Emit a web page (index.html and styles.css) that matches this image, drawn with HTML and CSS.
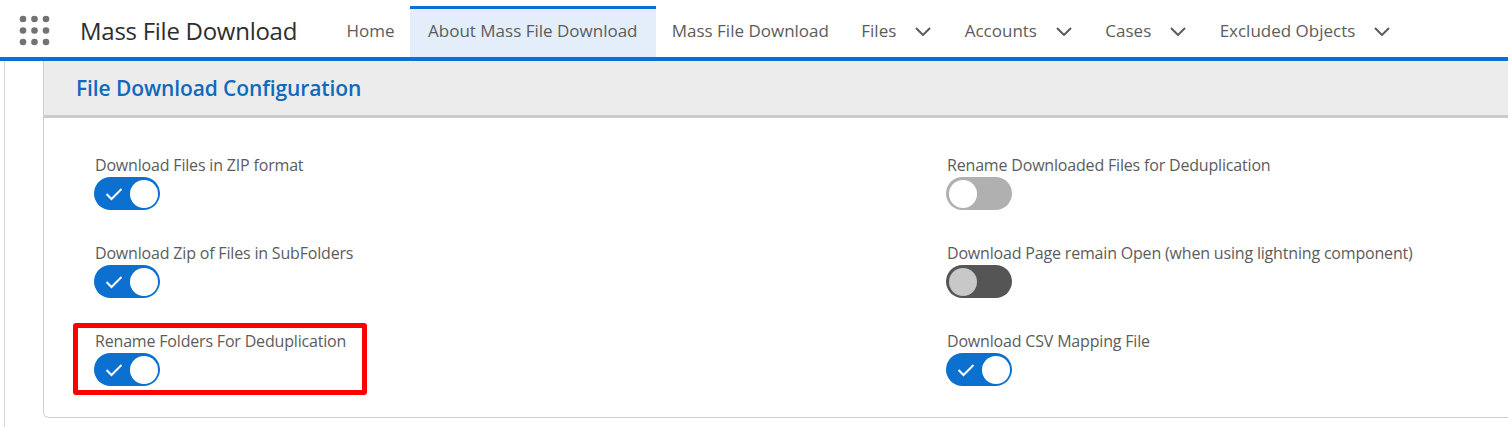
FILE: index.html
```html
<!DOCTYPE html>
<html lang="en">
<head>
    <meta charset="UTF-8">
    <title>Mass File Download</title>
    <link rel="stylesheet" href="styles.css">
</head>
<body>
    <header class="nav">
        <svg class="launcher" width="30" height="30" viewBox="0 0 30 30">
            <circle cx="3" cy="3" r="3.3"/><circle cx="14.5" cy="3" r="3.3"/><circle cx="26" cy="3" r="3.3"/>
            <circle cx="3" cy="14.5" r="3.3"/><circle cx="14.5" cy="14.5" r="3.3"/><circle cx="26" cy="14.5" r="3.3"/>
            <circle cx="3" cy="26" r="3.3"/><circle cx="14.5" cy="26" r="3.3"/><circle cx="26" cy="26" r="3.3"/>
        </svg>
        <div class="app-name">Mass File Download</div>
        <nav class="tabs">
            <a class="tab home">Home</a>
            <a class="tab active">About Mass File Download</a>
            <a class="tab">Mass File Download</a>
            <a class="tab">Files<svg class="chev" width="16" height="9" viewBox="0 0 16 9"><path d="M1 1l7 7 7-7"/></svg></a>
            <a class="tab">Accounts<svg class="chev" width="16" height="9" viewBox="0 0 16 9"><path d="M1 1l7 7 7-7"/></svg></a>
            <a class="tab">Cases<svg class="chev" width="16" height="9" viewBox="0 0 16 9"><path d="M1 1l7 7 7-7"/></svg></a>
            <a class="tab">Excluded Objects<svg class="chev" width="16" height="9" viewBox="0 0 16 9"><path d="M1 1l7 7 7-7"/></svg></a>
        </nav>
    </header>

    <main class="page">
        <section class="card">
            <h2 class="card-title">File Download Configuration</h2>
            <div class="options">
                <div class="field">
                    <div class="label">Download Files in ZIP format</div>
                    <div class="toggle on"><svg class="tick" width="18" height="14" viewBox="0 0 18 14"><path d="M1.5 7l5 5 10-10"/></svg><span class="knob"></span></div>
                </div>
                <div class="field">
                    <div class="label">Rename Downloaded Files for Deduplication</div>
                    <div class="toggle off"><span class="knob"></span></div>
                </div>
                <div class="field">
                    <div class="label">Download Zip of Files in SubFolders</div>
                    <div class="toggle on"><svg class="tick" width="18" height="14" viewBox="0 0 18 14"><path d="M1.5 7l5 5 10-10"/></svg><span class="knob"></span></div>
                </div>
                <div class="field">
                    <div class="label">Download Page remain Open (when using lightning component)</div>
                    <div class="toggle off dark"><span class="knob"></span></div>
                </div>
                <div class="field marked">
                    <div class="label">Rename Folders For Deduplication</div>
                    <div class="toggle on"><svg class="tick" width="18" height="14" viewBox="0 0 18 14"><path d="M1.5 7l5 5 10-10"/></svg><span class="knob"></span></div>
                </div>
                <div class="field">
                    <div class="label">Download CSV Mapping File</div>
                    <div class="toggle on"><svg class="tick" width="18" height="14" viewBox="0 0 18 14"><path d="M1.5 7l5 5 10-10"/></svg><span class="knob"></span></div>
                </div>
            </div>
        </section>
    </main>
</body>
</html>
```

FILE: styles.css
```css
html, body {
    margin: 0;
    height: 100%;
    overflow: hidden;
    background: #fff;
}

body {
    font-family: "Open Sans", "Noto Sans", sans-serif;
    color: #5c5c5c;
}

.nav {
    display: flex;
    align-items: stretch;
    height: 57px;
    border-bottom: 4px solid #0b70d5;
}

.launcher {
    flex: none;
    overflow: visible;
    fill: #727272;
    margin: 16px 0 0 20px;
}

.app-name {
    flex: none;
    margin-left: 30px;
    width: 249px;
    padding-top: 14px;
    font-size: 24px;
    line-height: 34px;
    letter-spacing: -0.27px;
    color: #2e2e2e;
}

.tabs {
    display: flex;
    margin-top: 6px;
}

.tab {
    display: flex;
    align-items: center;
    box-sizing: border-box;
    height: 51px;
    padding: 0 16.2px 5px;
    border-top: 3px solid transparent;
    font-size: 17px;
    white-space: nowrap;
}

.tab.home {
    padding: 0 15.5px 5px 17.5px;
}

.tab.active {
    padding: 0 18px 5px;
    background: #e3eefa;
    border-top-color: #0b70d5;
}

.chev {
    margin: 2px 1px 0 19px;
    fill: none;
    stroke: #5c5c5c;
    stroke-width: 2;
}

.page {
    height: 366px;
    padding-left: 43px;
    background: linear-gradient(#d6d6d6, #d6d6d6) 4px 0 / 1px 100% no-repeat;
}

.card {
    height: 356px;
    margin-right: -10px;
    border: 1px solid #cfcfcf;
    border-top: 0;
    border-radius: 0 0 6px 6px;
}

.card-title {
    margin: 0;
    height: 54px;
    padding-left: 32px;
    background: #ececec;
    border-bottom: 3px solid #cbcbcb;
    font-size: 21px;
    line-height: 54px;
    font-weight: 600;
    letter-spacing: -0.1px;
    color: #0f69bd;
}

.options {
    display: grid;
    grid-template-columns: 852px 1fr;
    grid-auto-rows: 88px;
    padding: 35px 0 0 50px;
}

.field {
    position: relative;
}

.label {
    margin-left: 1px;
    font-size: 16px;
    line-height: 24px;
    letter-spacing: -0.18px;
    white-space: nowrap;
}

.marked::after {
    content: "";
    position: absolute;
    left: -21px;
    top: -6px;
    width: 284px;
    height: 62px;
    border: 5px solid #f00;
    border-radius: 3px;
}

.toggle {
    position: relative;
    display: flex;
    align-items: center;
    box-sizing: border-box;
    width: 66px;
    height: 33px;
    border-radius: 17px;
}

.toggle.on {
    background: #0b70d0;
}

.toggle.off {
    background: #b0b0b0;
}

.toggle.dark {
    background: #555;
}

.knob {
    position: absolute;
    top: 2.5px;
    width: 28px;
    height: 28px;
    border-radius: 50%;
    background: #fff;
}

.on .knob {
    right: 2.5px;
}

.off .knob {
    left: 2.5px;
}

.dark .knob {
    background: #c8c8c8;
}

.tick {
    margin-left: 11px;
    fill: none;
    stroke: #fff;
    stroke-width: 2;
}
```
